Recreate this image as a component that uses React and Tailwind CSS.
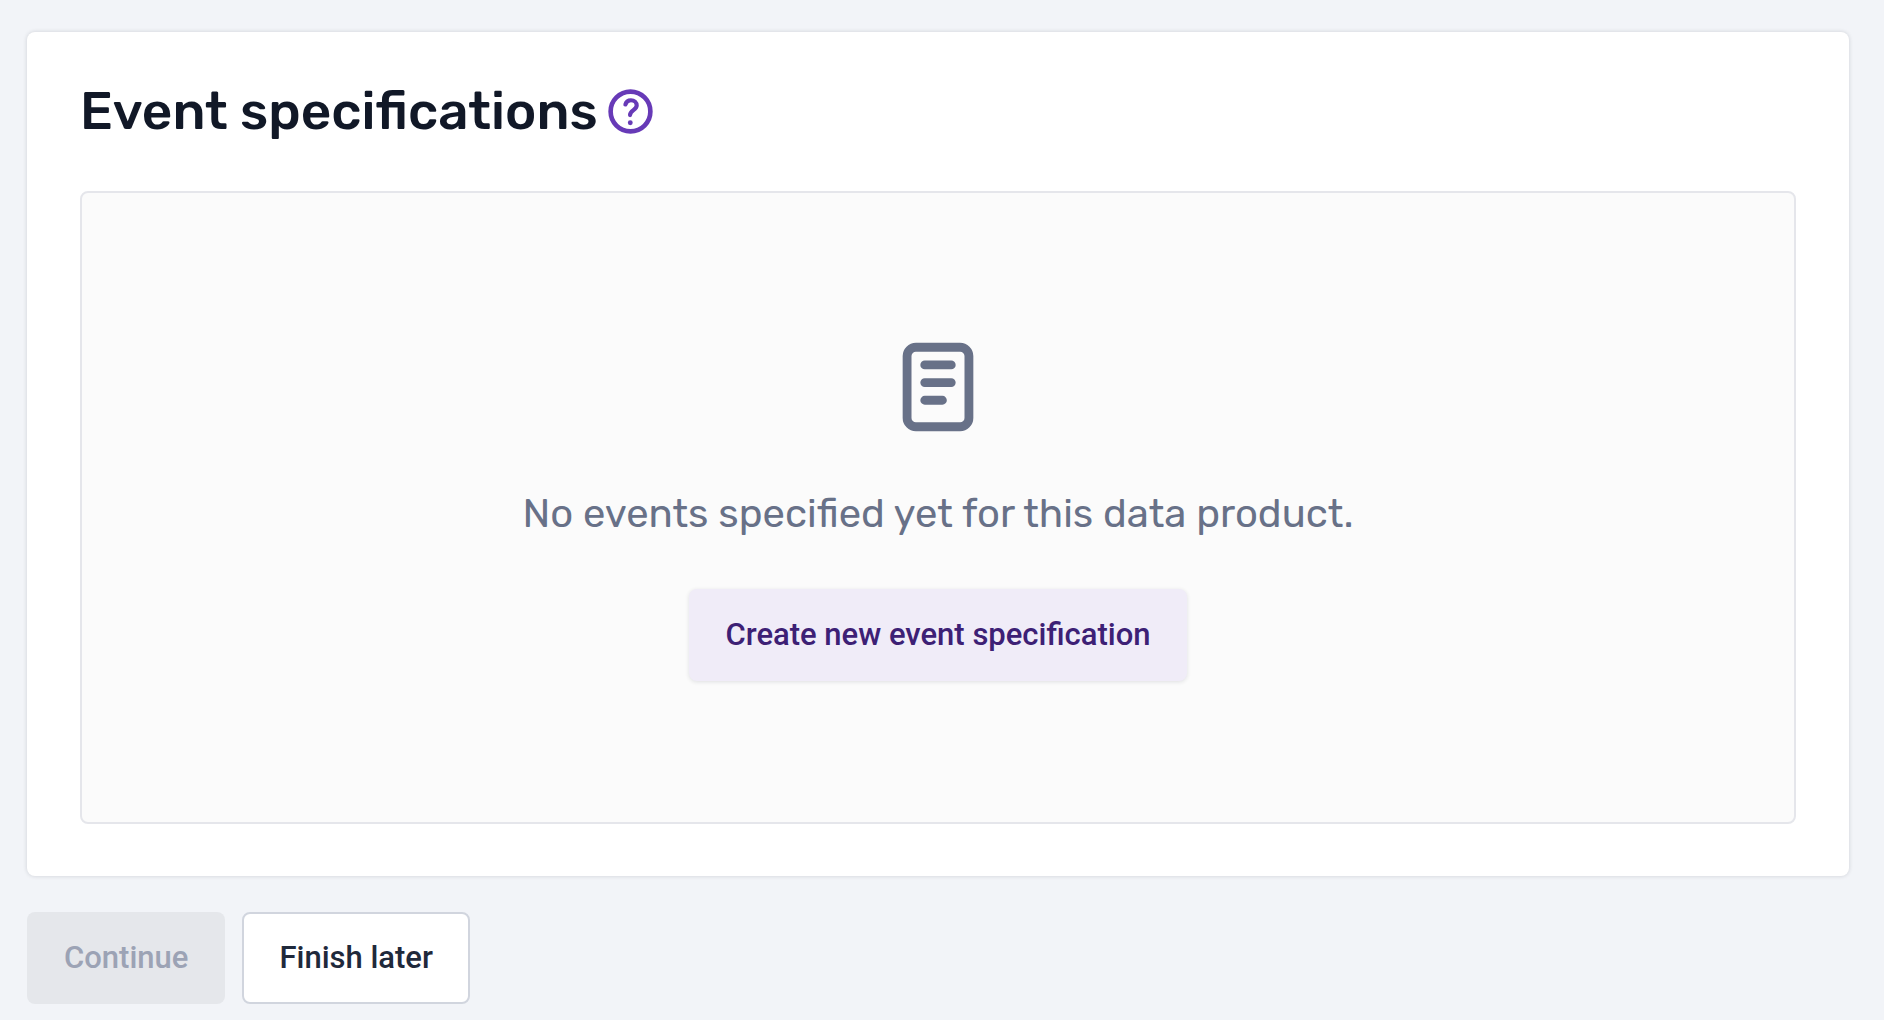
function HelpIcon() {
  return (
    <svg viewBox="0 0 24 24" className="size-[53px]" fill="none" stroke="currentColor" strokeLinecap="round" strokeLinejoin="round" aria-hidden="true">
      <circle cx="12" cy="12" r="9" strokeWidth="2.1" />
      <path d="M9.7 8.8C10 7.6 11 6.9 12.2 6.9C13.7 6.9 14.8 7.9 14.8 9.3C14.8 11.3 11.8 11.5 11.8 13.6" strokeWidth="1.9" />
      <circle cx="11.9" cy="17.1" r="1.1" fill="currentColor" stroke="none" />
    </svg>
  );
}

function DocumentIcon() {
  return (
    <svg viewBox="0 0 24 24" className="size-[106px] text-[#687188]" fill="none" stroke="currentColor" strokeWidth="2" strokeLinecap="round" aria-hidden="true">
      <rect x="5" y="3" width="14" height="18" rx="2" />
      <path d="M9 7h6M9 11h6M9 15h4" />
    </svg>
  );
}

export default function App() {
  return (
    <main className="min-h-screen bg-[#f2f4f8] pt-8 pr-[35px] pb-4 pl-[27px] font-['Roboto',sans-serif]">
      <section className="rounded-lg bg-white px-[53px] pt-[46px] pb-[52px] shadow-[0_0_4px_rgba(17,24,39,0.16)]">
        <header className="flex items-center gap-1.5">
          <h1 className="font-['Rubik','Roboto',sans-serif] text-[53px] leading-[66px] font-medium text-[#111827]">Event specifications</h1>
          <button type="button" aria-label="About event specifications" className="text-[#673ab7]">
            <HelpIcon />
          </button>
        </header>
        <div className="mt-[47px] flex flex-col items-center rounded-lg border-2 border-[#e5e6eb] bg-[#fbfbfb] pt-[141px] pb-[141px]">
          <DocumentIcon />
          <p className="mt-[50px] font-['Rubik','Roboto',sans-serif] text-[40px] leading-12 text-[#687188]">No events specified yet for this data product.</p>
          <button type="button" className="mt-[51px] h-[92px] rounded-lg bg-[#f0ecf8] px-9 text-[31px] font-medium text-[#3d2075] shadow-[0_1px_4px_rgba(17,24,39,0.12)]">
            Create new event specification
          </button>
        </div>
      </section>
      <div className="mt-9 flex gap-[17px]">
        <button type="button" disabled className="h-[92px] rounded-lg bg-[#e5e7eb] px-[37px] text-[31px] font-medium text-[#9ca3b5]">Continue</button>
        <button type="button" className="h-[92px] rounded-lg border-2 border-[#d1d5de] bg-white px-[35px] text-[31px] font-medium text-[#1f293b]">Finish later</button>
      </div>
    </main>
  );
}
